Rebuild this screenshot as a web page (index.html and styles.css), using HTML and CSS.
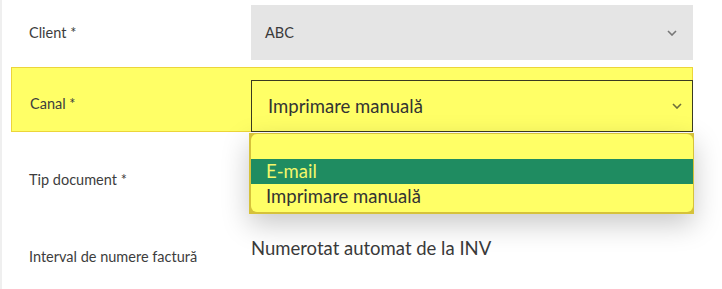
FILE: index.html
```html
<!DOCTYPE html>
<html lang="ro">
<head>
  <meta charset="UTF-8" />
  <title>Canal</title>
  <link rel="stylesheet" href="styles.css">
</head>
<body>
  <form class="form">
    <div class="row">
      <label class="label">Client *</label>
      <div class="select select-disabled">
        <span>ABC</span>
        <svg class="chevron" width="10" height="6" viewBox="0 0 10 6"><path d="M1 1 L5 5 L9 1" fill="none" stroke="#777" stroke-width="1.6"/></svg>
      </div>
    </div>

    <div class="row row-focus">
      <label class="label">Canal *</label>
      <div class="field-wrap">
        <div class="select select-active">
          <span>Imprimare manuală</span>
          <svg class="chevron" width="10" height="6" viewBox="0 0 10 6"><path d="M1 1 L5 5 L9 1" fill="none" stroke="#6e6e3a" stroke-width="1.6"/></svg>
        </div>
        <!-- open native list -->
        <div class="dropdown">
          <ul class="options">
            <li class="option"></li>
            <li class="option selected">E-mail</li>
            <li class="option">Imprimare manuală</li>
          </ul>
        </div>
      </div>
    </div>

    <div class="row row-plain">
      <label class="label">Tip document *</label>
      <div class="value"></div>
    </div>

    <div class="row row-plain row-last">
      <label class="label">Interval de numere factură</label>
      <div class="value">Numerotat automat de la INV</div>
    </div>
  </form>
</body>
</html>
```

FILE: styles.css
```css
html, body {
  margin: 0;
  padding: 0;
  background: white;
  font-family: Lato, "Open Sans", sans-serif;
  color: #3a3a3a;
}

.form {
  border-left: 2px solid #efefef;
  height: 289px;
  box-sizing: border-box;
  padding-top: 5px;
  display: flex;
  flex-direction: column;
}

.row {
  display: flex;
  align-items: center;
  margin: 0 29px 0 9px;
}

.label {
  width: 222px;
  padding-left: 18px;
  font-size: 14.5px;
  color: #3d3d3d;
  flex-shrink: 0;
}

.select {
  flex: 1;
  display: flex;
  align-items: center;
  justify-content: space-between;
  box-sizing: border-box;
}

.select-disabled {
  height: 55px;
  background: #e5e5e5;
  padding: 0 16px 0 14px;
  font-size: 14.5px;
  color: #3a3a3a;
}

/* highlighted row */
.row-focus {
  margin-top: 7px;
  background: #ffff66;
  border: 1px solid #ecd53a;
  padding-top: 12px;
}
.row-focus .label {
  width: 221px;
  margin-top: -5px;
}

.field-wrap {
  flex: 1;
  position: relative;
  margin-bottom: -1px;
  margin-right: -1px;
}

.select-active {
  height: 52px;
  border: 1px solid #3a3a20;
  background: #ffff66;
  padding: 0 10px 0 16px;
  font-size: 18.5px;
  color: #333;
}

.dropdown {
  position: absolute;
  top: 53px;
  left: -2px;
  right: -1px;
  background: #d6c23a;
  padding: 1px 1px 2px 2px;
  box-shadow: 0 10px 28px rgba(0, 0, 0, 0.22);
  z-index: 5;
}

.options {
  list-style: none;
  margin: 0;
  padding: 1px 0 3px;
  background: #ffff66;
  border-radius: 6px;
  font-size: 18.5px;
}

.option {
  height: 25px;
  line-height: 25px;
  padding-left: 15px;
  color: #333;
}
.option:first-child {
  height: 24px;
}
.option.selected {
  background: #1f8c61;
  color: #f4f76a;
}

.row-plain {
  height: 94px;
}
.row-last {
  height: 60px;
}
.value {
  flex: 1;
  font-size: 18.5px;
  color: #3a3a3a;
  margin-top: -16px;
}
```
